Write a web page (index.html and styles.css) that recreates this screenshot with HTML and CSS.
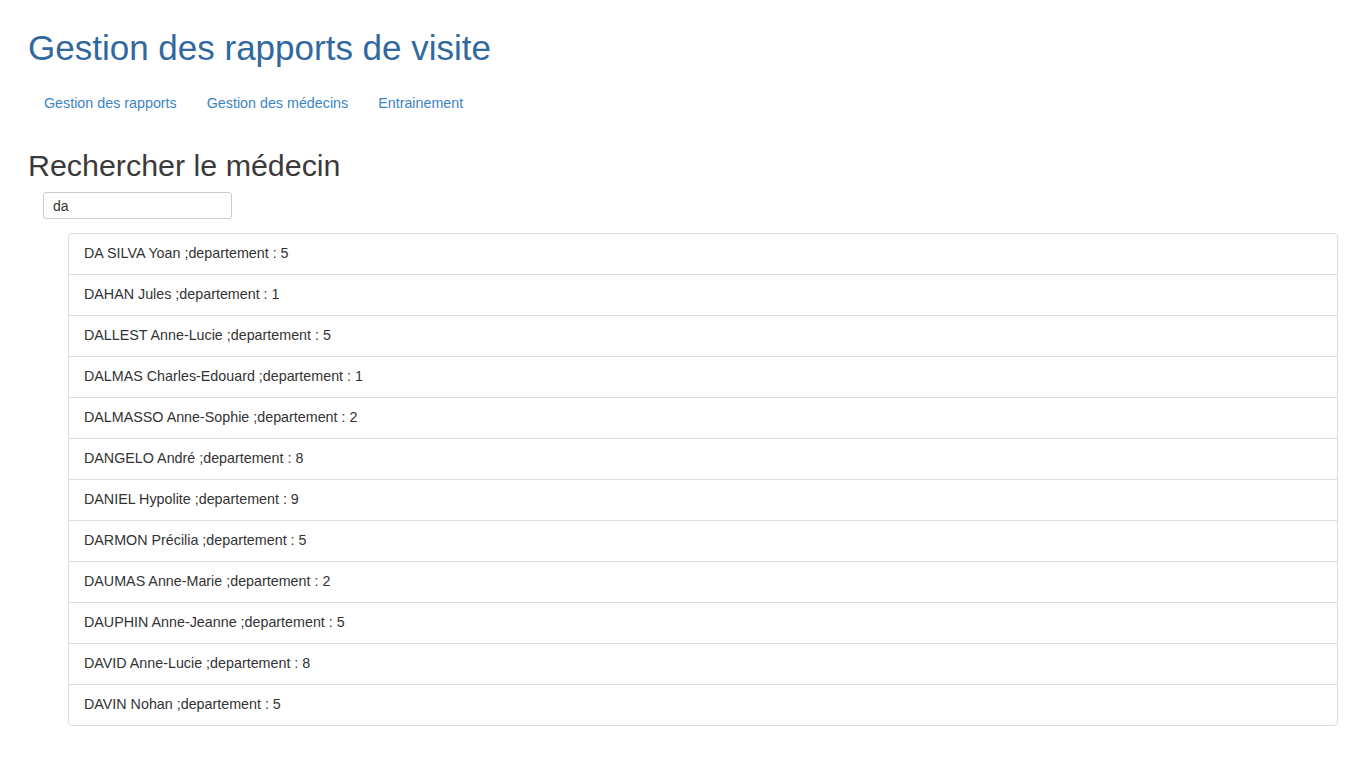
FILE: index.html
```html
<!DOCTYPE html>
<html lang="fr">
<head>
<meta charset="utf-8">
<title>Gestion des rapports de visite</title>
<link rel="stylesheet" href="styles.css">
</head>
<body>
<div class="page">
  <h1 class="title">Gestion des rapports de visite</h1>
  <ul class="nav">
    <li><a href="#">Gestion des rapports</a></li>
    <li><a href="#">Gestion des médecins</a></li>
    <li><a href="#">Entrainement</a></li>
  </ul>
  <h2 class="subtitle">Rechercher le médecin</h2>
  <div class="search">
    <input class="search-input" type="text" value="da">
  </div>
  <ul class="list-group">
    <li class="list-item">DA SILVA Yoan ;departement : 5</li>
    <li class="list-item">DAHAN Jules ;departement : 1</li>
    <li class="list-item">DALLEST Anne-Lucie ;departement : 5</li>
    <li class="list-item">DALMAS Charles-Edouard ;departement : 1</li>
    <li class="list-item">DALMASSO Anne-Sophie ;departement : 2</li>
    <li class="list-item">DANGELO André ;departement : 8</li>
    <li class="list-item">DANIEL Hypolite ;departement : 9</li>
    <li class="list-item">DARMON Précilia ;departement : 5</li>
    <li class="list-item">DAUMAS Anne-Marie ;departement : 2</li>
    <li class="list-item">DAUPHIN Anne-Jeanne ;departement : 5</li>
    <li class="list-item">DAVID Anne-Lucie ;departement : 8</li>
    <li class="list-item">DAVIN Nohan ;departement : 5</li>
  </ul>
</div>
</body>
</html>
```

FILE: styles.css
```css
* { box-sizing: border-box; }
html, body {
  margin: 0;
  padding: 0;
  background: #fff;
}
body {
  font-family: "Liberation Sans", Arial, Helvetica, sans-serif;
  font-size: 14px;
  line-height: 20px;
  color: #333;
}
.page {
  padding: 28px 28px 40px 28px;
}
.title {
  margin: 0 0 15px 0;
  font-size: 35px;
  line-height: 39.6px;
  font-weight: 500;
  color: #31699f;
}
.nav {
  list-style: none;
  margin: 0 0 26px 1px;
  padding: 0;
  display: flex;
}
.nav a {
  display: block;
  padding: 10px 15px;
  color: #3d83c4;
  text-decoration: none;
  font-size: 14.3px;
  line-height: 20px;
}
.subtitle {
  margin: 0 0 10px 0;
  font-size: 30.4px;
  line-height: 33px;
  font-weight: 500;
  color: #3a3a3a;
}
.search {
  padding-left: 15px;
  margin-bottom: 14px;
}
.search-input {
  display: block;
  width: 189px;
  height: 27px;
  margin: 0;
  padding: 4px 9px 2px;
  border: 1px solid #ccc;
  border-radius: 3px;
  font-family: "Liberation Sans", Arial, Helvetica, sans-serif;
  font-size: 14px;
  line-height: 19px;
  color: #333;
  background: #fff;
  outline: none;
}
.list-group {
  list-style: none;
  margin: 0 0 0 40px;
  padding: 0;
}
.list-item {
  padding: 10px 15px;
  border: 1px solid #ddd;
  margin-bottom: -1px;
  background: #fff;
  font-size: 14.3px;
  line-height: 19px;
  height: 42px;
  color: #333;
}
.list-item:first-child {
  border-top-left-radius: 4px;
  border-top-right-radius: 4px;
}
.list-item:last-child {
  margin-bottom: 0;
  border-bottom-left-radius: 4px;
  border-bottom-right-radius: 4px;
}
```
